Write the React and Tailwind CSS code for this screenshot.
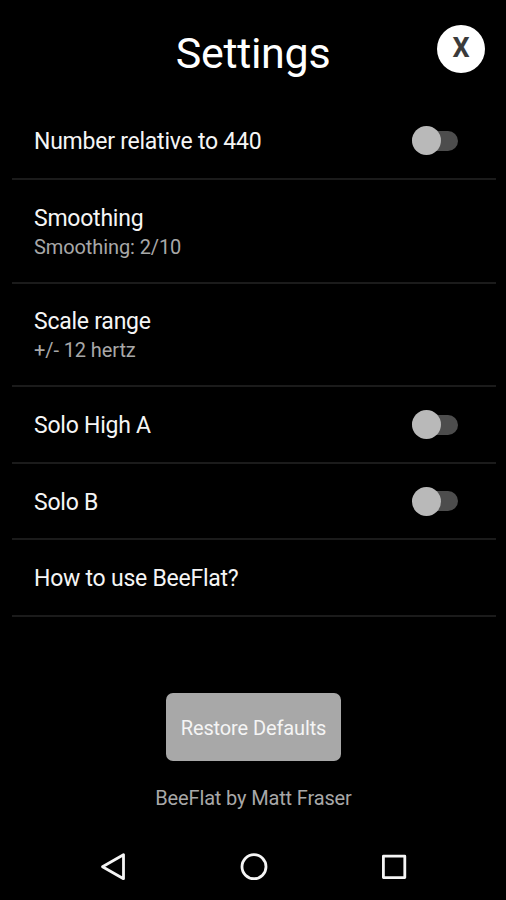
import { useState } from 'react';

const rows = [
  { id: 'relative', title: 'Number relative to 440', toggle: true, height: 'h-[77px]' },
  { id: 'smoothing', title: 'Smoothing', subtitle: 'Smoothing: 2/10', height: 'h-[104px]' },
  { id: 'scale', title: 'Scale range', subtitle: '+/- 12 hertz', height: 'h-[103px]' },
  { id: 'highA', title: 'Solo High A', toggle: true, height: 'h-[77px]' },
  { id: 'soloB', title: 'Solo B', toggle: true, height: 'h-[76px]' },
  { id: 'help', title: 'How to use BeeFlat?', height: 'h-[77px]' },
];

const Switch = ({ checked, onChange, label }) => (
  <button
    type="button"
    role="switch"
    aria-checked={checked}
    aria-label={label}
    onClick={onChange}
    className="flex h-[29px] w-[46px] items-center"
  >
    <span className="flex h-5 w-full items-center rounded-full bg-[#4d4d4d]">
      <span className={checked ? 'ml-[17px] size-[29px] rounded-full bg-white' : 'size-[29px] rounded-full bg-[#b9b9b9]'} />
    </span>
  </button>
);

const App = () => {
  const [enabled, setEnabled] = useState({});

  const toggle = (id) => setEnabled((prev) => ({ ...prev, [id]: !prev[id] }));

  return (
    <div className="flex h-[900px] w-[506px] flex-col overflow-hidden bg-black font-['Roboto',sans-serif] text-[#f5f5f5]">
      {/* Header */}
      <header className="grid h-[103px] shrink-0 grid-cols-[1fr_auto_1fr] items-start">
        <h1 className="col-start-2 pt-[28px] text-[43px] leading-[50px] tracking-[-0.3px] text-white">Settings</h1>
        <button
          type="button"
          aria-label="Close"
          className="mt-[25px] mr-[21px] flex size-12 items-center justify-center justify-self-end rounded-full bg-white pb-px text-[27px] leading-none font-bold text-[#3b3b3b]"
        >
          X
        </button>
      </header>

      {/* Settings list */}
      <main className="mr-[10px] ml-[11.5px]">
        {rows.map((row) => (
          <div key={row.id} className={`flex items-center justify-between border-b-2 border-[#1b1b1b] pr-[38px] pl-[22.5px] ${row.height}`}>
            <div className="pt-[2px]">
              <p className="text-[23px] leading-[29px] tracking-[-0.24px]">{row.title}</p>
              {row.subtitle && <p className="text-[20px] leading-[28px] tracking-[-0.1px] text-[#a8a8a8]">{row.subtitle}</p>}
            </div>
            {row.toggle && <Switch checked={!!enabled[row.id]} onChange={() => toggle(row.id)} label={row.title} />}
          </div>
        ))}
      </main>

      {/* Restore and credits */}
      <section className="mt-[76px] flex flex-col items-center pl-px">
        <button type="button" className="h-[68px] w-[175px] rounded-[7px] bg-[#a8a8a8] pt-[2px] text-[20px] tracking-[-0.12px]" onClick={() => setEnabled({})}>
          Restore Defaults
        </button>
        <p className="mt-[23px] text-[20px] leading-7 tracking-[-0.15px] text-[#a8a8a8]">BeeFlat by Matt Fraser</p>
      </section>

      {/* Android navigation bar */}
      <nav className="mt-auto flex h-[66px] shrink-0 items-center justify-between pr-[97px] pl-[98px]">
        <svg className="size-[30px]" viewBox="0 0 30 30" fill="none" stroke="currentColor" strokeWidth="2.8" strokeLinejoin="round">
          <path d="M25.5 2.7v24L4.5 14.7Z" />
        </svg>
        <svg className="size-[30px]" viewBox="0 0 30 30" fill="none" stroke="currentColor" strokeWidth="2.8">
          <circle cx="15" cy="14.7" r="12" />
        </svg>
        <svg className="size-[30px]" viewBox="0 0 30 30" fill="none" stroke="currentColor" strokeWidth="2.8" strokeLinejoin="round">
          <rect x="4.4" y="4.2" width="21.4" height="21.4" />
        </svg>
      </nav>
    </div>
  );
};

export default App;
